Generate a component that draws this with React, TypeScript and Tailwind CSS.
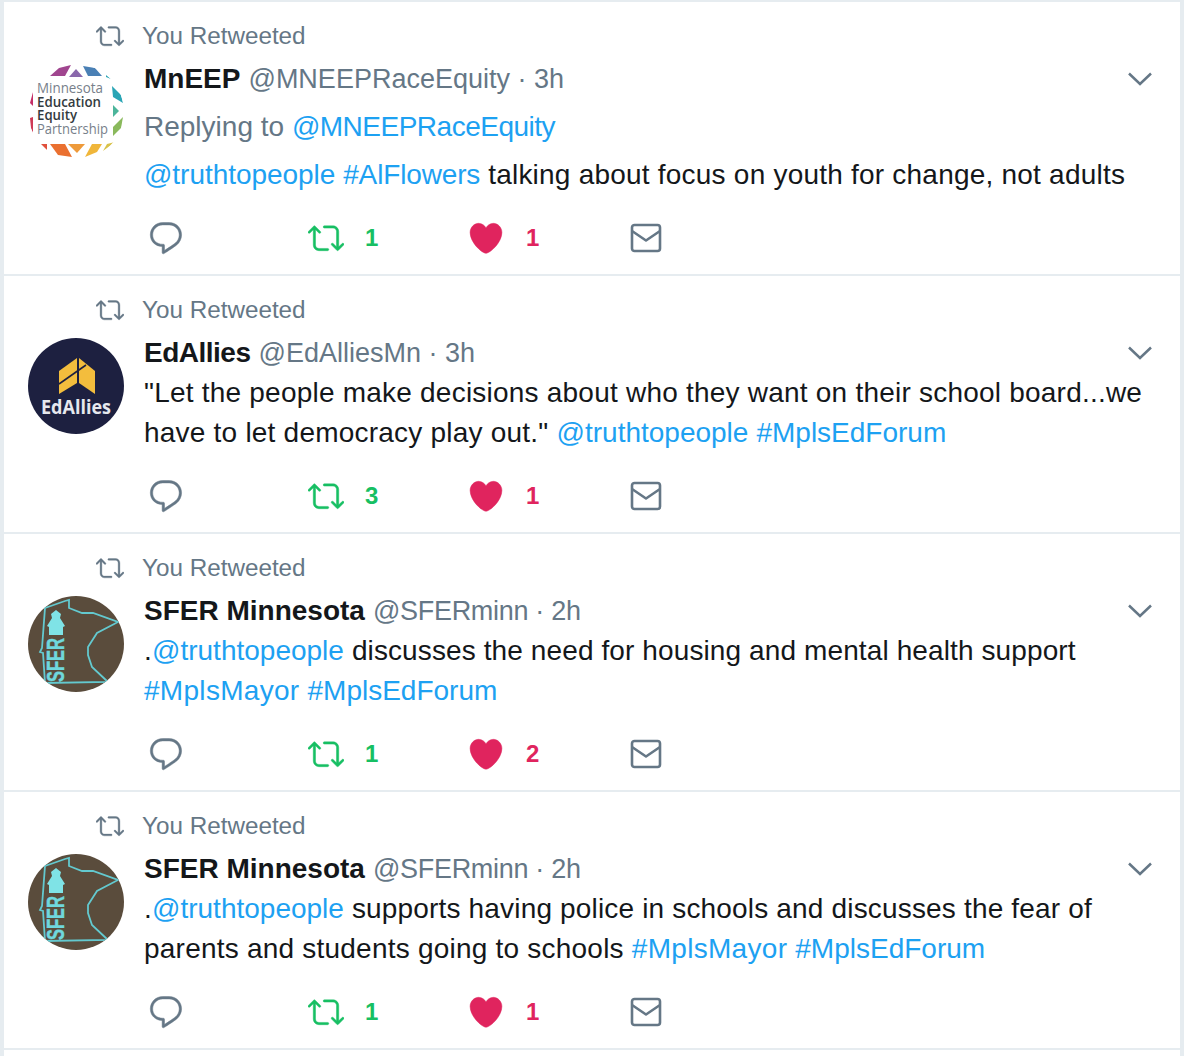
import React from 'react';

const RETWEET =
    'M23.77 15.67c-.292-.293-.767-.293-1.06 0l-2.22 2.22V7.65c0-2.068-1.683-3.75-3.75-3.75h-5.85c-.414 0-.75.336-.75.75s.336.75.75.75h5.85c1.24 0 2.25 1.01 2.25 2.25v10.24l-2.22-2.22c-.293-.293-.768-.293-1.06 0s-.294.768 0 1.06l3.5 3.5c.145.147.337.22.53.22s.383-.072.53-.22l3.5-3.5c.294-.292.294-.767 0-1.06zm-10.66 3.28H7.26c-1.24 0-2.25-1.01-2.25-2.25V6.46l2.22 2.22c.148.147.34.22.532.22s.384-.073.53-.22c.293-.293.293-.768 0-1.06l-3.5-3.5c-.293-.294-.768-.294-1.06 0l-3.5 3.5c-.294.292-.294.767 0 1.06s.767.293 1.06 0l2.22-2.22V16.7c0 2.068 1.683 3.75 3.75 3.75h5.85c.414 0 .75-.336.75-.75s-.337-.75-.75-.75z';
const REPLY =
    'M14.046 2.242l-4.148-.01h-.002c-4.374 0-7.8 3.427-7.8 7.802 0 4.098 3.186 7.206 7.465 7.37v3.828c0 .108.044.286.12.403.142.225.384.347.632.347.138 0 .277-.038.402-.118.264-.168 6.473-4.14 8.088-5.506 1.902-1.61 3.04-3.97 3.043-6.312v-.017c-.006-4.367-3.43-7.787-7.8-7.788zm3.787 12.972c-1.134.96-4.862 3.405-6.772 4.643V16.67c0-.414-.335-.75-.75-.75h-.396c-3.66 0-6.318-2.476-6.318-5.886 0-3.534 2.768-6.302 6.3-6.302l4.147.01h.002c3.532 0 6.3 2.766 6.302 6.296-.003 1.91-.942 3.844-2.514 5.176z';
const HEART =
    'M12 21.638h-.014C9.403 21.59 1.95 14.856 1.95 8.478c0-3.064 2.525-5.754 5.403-5.754 2.29 0 3.83 1.58 4.646 2.73.814-1.148 2.354-2.73 4.645-2.73 2.88 0 5.404 2.69 5.404 5.755 0 6.376-7.454 13.11-10.037 13.157H12z';

function Icon({ d, className }: { d: string; className: string }) {
    return (
        <svg viewBox="0 0 24 24" className={className} fill="currentColor" stroke="currentColor" strokeWidth="0.3">
            <path d={d} />
        </svg>
    );
}

function MailIcon() {
    return (
        <svg viewBox="0 0 32 32" className="w-8 h-8 text-[#657786]" fill="none" stroke="currentColor" strokeWidth="2.6">
            <rect x="2" y="3" width="28" height="26" rx="2.5" />
            <path d="M2 9 L16 18.5 L30 9" strokeLinejoin="round" />
        </svg>
    );
}

function MneepAvatar() {
    const segments = [
        ['M22 12 L31 4 L43 1 L37 12 Z', '#a0458f'],
        ['M41 13 L48 5 L55 13 Z', '#8a68ac'],
        ['M55 2 L67 4 L74 12 L60 12 Z', '#4a80b5'],
        ['M78 11 L83 15 L78 13 Z', '#2aa5b5'],
        ['M84 22 L93 31 L95 39 L85 33 Z', '#2aa5b5'],
        ['M85 41 L91 47 L85 53 Z', '#4cb59b'],
        ['M95 53 L93 64 L85 72 L85 63 Z', '#8ab95c'],
        ['M87 78 L75 87 L79 80 Z', '#d8c24a'],
        ['M64 80 L74 80 L69 88 L57 93 Z', '#f0b63a'],
        ['M40 80 L57 80 L49 89 Z', '#ee9a3a'],
        ['M22 80 L37 80 L44 93 L30 91 Z', '#ea7030'],
        ['M13 80 L19 80 L19 86 Z', '#e0503c'],
        ['M2 54 L5 53 L5 69 L3 64 Z', '#cf3a56'],
        ['M2 39 L5 28 L5 42 Z', '#c62f68'],
    ];
    const font = 'Open Sans, sans-serif';
    return (
        <svg viewBox="0 0 96 96" className="w-24 h-24 rounded-full bg-white">
            {segments.map(([d, fill]) => (
                <path key={d} d={d} fill={fill} />
            ))}
            <text x="9" y="29" fontSize="14" fill="#77808a" fontFamily={font} textLength="66" lengthAdjust="spacingAndGlyphs">Minnesota</text>
            <text x="9" y="43" fontSize="14" fontWeight="600" fill="#333a40" fontFamily={font} textLength="64" lengthAdjust="spacingAndGlyphs">Education</text>
            <text x="9" y="56" fontSize="14" fontWeight="600" fill="#333a40" fontFamily={font} textLength="40" lengthAdjust="spacingAndGlyphs">Equity</text>
            <text x="9" y="70" fontSize="14" fill="#77808a" fontFamily={font} textLength="71" lengthAdjust="spacingAndGlyphs">Partnership</text>
        </svg>
    );
}

function EdAlliesAvatar() {
    return (
        <svg viewBox="0 0 96 96" className="w-24 h-24 rounded-full bg-[#1d2040]">
            <path d="M31 33 L49 20 L49 45 L31 56 Z" fill="#f3bd3d" />
            <path d="M51 20 L67 33 L67 56 L51 45 Z" fill="#f3bd3d" />
            <path d="M31 46 L58 27" stroke="#1d2040" strokeWidth="1.6" />
            <text x="13" y="76" fontSize="19" fontWeight="700" fill="#e6e8ee" fontFamily="Open Sans, sans-serif" textLength="70" lengthAdjust="spacingAndGlyphs">EdAllies</text>
        </svg>
    );
}

function SferAvatar() {
    return (
        <svg viewBox="0 0 96 96" className="w-24 h-24 rounded-full bg-[#5a4c3c]">
            <path
                d="M17 12 L37 5 L41 4 L41 12 L54 17 L65 17 L90 26 L69 37 L60 51 L60 59 L64 71 L80 86 L17 87 L15 57 L12 56 L14 52 Z"
                fill="none"
                stroke="#63c9cf"
                strokeWidth="1.8"
            />
            <path d="M28 14 L33 18 L32 22 L37 30 L35 31 L35 39 L21 39 L21 31 L19 30 L24 22 L23 18 Z" fill="#7fe3e6" />
            <text
                transform="translate(36 86) rotate(-90)"
                fontSize="24"
                fontWeight="700"
                fill="#6fd8dd"
                stroke="#6fd8dd"
                strokeWidth="0.5"
                fontFamily="Liberation Sans, sans-serif"
                textLength="44"
                lengthAdjust="spacingAndGlyphs"
            >
                SFER
            </text>
        </svg>
    );
}

interface TweetData {
    avatar: React.ReactNode;
    name: string;
    nameClass?: string;
    handle: string;
    handleClass?: string;
    time: string;
    body: React.ReactNode;
    retweets: number;
    likes: number;
}

const Link = ({ children, className = 'tracking-normal' }: { children: React.ReactNode; className?: string }) => (
    <span className={`text-[#1da1f2] ${className}`}>{children}</span>
);

const tweets: TweetData[] = [
    {
        avatar: <MneepAvatar />,
        name: 'MnEEP',
        handle: '@MNEEPRaceEquity',
        time: '3h',
        retweets: 1,
        likes: 1,
        body: (
            <div className="mt-1 -mb-1 leading-[48px]">
                <div className="text-[#657786] tracking-normal">
                    Replying to <Link className="tracking-[-0.5px]">@MNEEPRaceEquity</Link>
                </div>
                <div>
                    <Link className="tracking-[-0.05px]">@truthtopeople</Link> <Link className="tracking-[-0.15px]">#AlFlowers</Link> talking about focus on youth for change, not adults
                </div>
            </div>
        ),
    },
    {
        avatar: <EdAlliesAvatar />,
        name: 'EdAllies',
        nameClass: 'tracking-[-0.5px]',
        handle: '@EdAlliesMn',
        time: '3h',
        retweets: 3,
        likes: 1,
        body: (
            <>
                "Let the people make decisions about who they want on their school board...we
                <br />
                have to let democracy play out." <Link>@truthtopeople</Link> <Link>#MplsEdForum</Link>
            </>
        ),
    },
    {
        avatar: <SferAvatar />,
        name: 'SFER Minnesota',
        handle: '@SFERminn',
        handleClass: 'tracking-[-0.3px]',
        time: '2h',
        retweets: 1,
        likes: 2,
        body: (
            <>
                .<Link>@truthtopeople</Link> <span className="tracking-[0.11px]">discusses the need for housing and mental health support</span>
                <br />
                <Link className="tracking-[0.3px]">#MplsMayor</Link> <Link>#MplsEdForum</Link>
            </>
        ),
    },
    {
        avatar: <SferAvatar />,
        name: 'SFER Minnesota',
        handle: '@SFERminn',
        handleClass: 'tracking-[-0.3px]',
        time: '2h',
        retweets: 1,
        likes: 1,
        body: (
            <>
                .<Link>@truthtopeople</Link> <span className="tracking-[0.17px]">supports having police in schools and discusses the fear of</span>
                <br />
                parents and students going to schools <Link className="tracking-[0.3px]">#MplsMayor</Link> <Link>#MplsEdForum</Link>
            </>
        ),
    },
];

function Tweet({ tweet }: { tweet: TweetData }) {
    return (
        <article className="bg-white border-b-2 border-[#e6ecf0] pl-6 pr-7 pt-[22px] pb-4">
            <div className="flex items-center h-6 mb-2.5">
                <div className="w-[116px] flex justify-end pr-5">
                    <Icon d={RETWEET} className="w-7 h-7 text-[#657786]" />
                </div>
                <span className="text-[24.25px] text-[#657786] -ml-0.5">You Retweeted</span>
            </div>
            <div className="flex">
                <div className="w-[116px] shrink-0 pt-1.5">{tweet.avatar}</div>
                <div className="flex-1 min-w-0">
                    <div className="flex items-center h-[42px]">
                        <span className={`font-bold text-[28px] text-[#14171a] ${tweet.nameClass ?? ''}`}>{tweet.name}</span>
                        <span className={`ml-2 text-[27px] text-[#657786] ${tweet.handleClass ?? ''}`}>
                            {tweet.handle} · {tweet.time}
                        </span>
                        <svg viewBox="0 0 24 14" className="ml-auto w-6 h-3.5 text-[#657786]" fill="none" stroke="currentColor" strokeWidth="2.5">
                            <path d="M1 1.5 L12 12 L23 1.5" />
                        </svg>
                    </div>
                    <div className="-mt-px text-[28px] leading-10 tracking-[0.22px] text-[#14171a] whitespace-nowrap">{tweet.body}</div>
                    <div className="flex items-center mt-[23px] h-10 ml-[3px]">
                        <div className="w-[161px]">
                            <Icon d={REPLY} className="w-[38px] h-[38px] text-[#657786]" />
                        </div>
                        <div className="w-[159px] flex items-center gap-[21px] text-[#17bf63]">
                            <Icon d={RETWEET} className="w-9 h-9" />
                            <span className="font-bold text-[24px]">{tweet.retweets}</span>
                        </div>
                        <div className="w-[163px] flex items-center gap-[21px] text-[#e0245e]">
                            <Icon d={HEART} className="w-[38px] h-[38px]" />
                            <span className="font-bold text-[24px]">{tweet.likes}</span>
                        </div>
                        <MailIcon />
                    </div>
                </div>
            </div>
        </article>
    );
}

export default function App() {
    return (
        <div className="h-[1056px] overflow-hidden bg-[#e6ecf0] px-1 pt-0.5 font-['Liberation_Sans',sans-serif]">
            <div className="bg-white h-full">
                {tweets.map((tweet, i) => (
                    <Tweet key={i} tweet={tweet} />
                ))}
            </div>
        </div>
    );
}
